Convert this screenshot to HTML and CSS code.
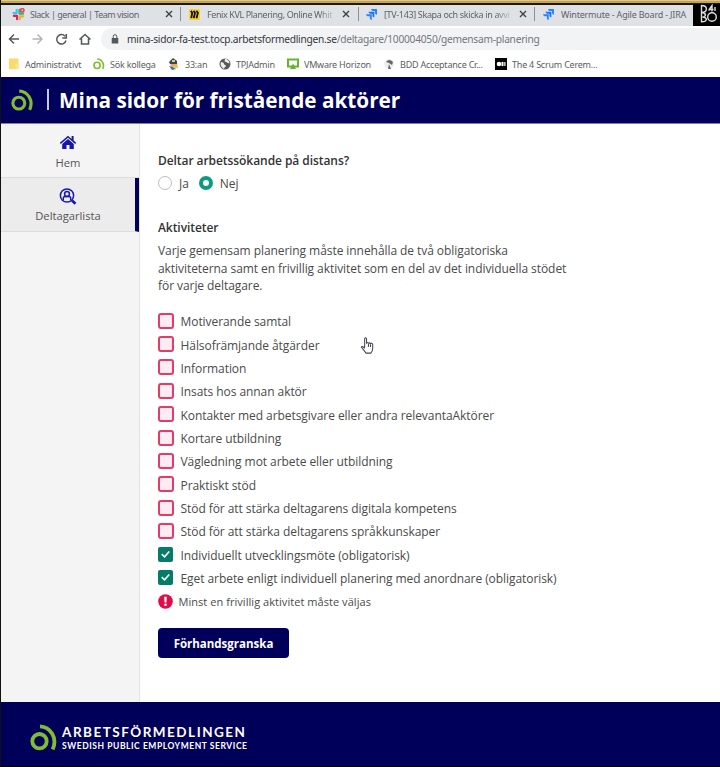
FILE: index.html
```html
<!DOCTYPE html>
<html lang="sv">
<head>
<meta charset="utf-8">
<title>Mina sidor för fristående aktörer</title>
<link rel="stylesheet" href="styles.css">
</head>
<body>
<svg width="0" height="0" class="defs" aria-hidden="true">
  <symbol id="logo" viewBox="0 0 28 28"><g fill="none" stroke="#80bd32" stroke-width="3.8"><circle cx="9.500" cy="17.200" r="7.200"/><path d="M10 2.400C20 2.800 28 13.500 22.700 25.500"/></g></symbol>
  <symbol id="jira" viewBox="0 0 12 12"><path d="M5.5 0H12v6.3C10.4 6 9.8 5 9.8 3.9V2.3H8.2C6.5 2.3 5.7 1.400 5.5 0Z" fill="#2684ff"/><path d="M2.800 2.900h6.300v6.200C7.600 8.800 7 7.800 7 6.700V5.200H5.400C3.900 5.200 3 4.300 2.800 2.900Z" fill="#1874ed"/><path d="M0 5.700h6.300V12C4.800 11.700 4.200 10.600 4.200 9.500V8H2.700C1.200 8 .2 7.100 0 5.700Z" fill="#2684ff"/></symbol>
  <symbol id="check" viewBox="0 0 16 16"><path d="M4 7.600 7 10.500 12 4.700" fill="none" stroke="#fff" stroke-width="1.700"/></symbol>
</svg>
<div class="window">
  <div class="tabs">
    <div class="tab tab-slack">
      <svg class="fav" viewBox="0 0 14 14"><g stroke-width="2.300" stroke-linecap="round"><path d="M5 2v3M1.500 5.500H5" stroke="#36c5f0"/><path d="M8 2v4M8.500 6h3.500" stroke="#2eb67d"/><path d="M2 8.500h3.500M5.500 9v3" stroke="#e01e5a"/><path d="M8.500 9v3M9 9h3" stroke="#ecb22e"/></g><circle cx="11" cy="2.500" r="2.700" fill="#e94b5b"/><circle cx="11" cy="2.500" r=".8" fill="#fff"/></svg>
      <span class="label">Slack | general | Team vision</span><svg class="close" viewBox="0 0 8 8"><path d="m1 1 6 6M7 1 1 7"/></svg>
    </div>
    <div class="tab tab-fenix">
      <svg class="fav" viewBox="0 0 12 12"><path fill="#ffd02f" d="M0 0h12v12H0z"/><path d="m2 2 1.500 2-1 6M5 2l1.500 2-1.200 6M8 2l1.700 2-1.500 6" fill="none" stroke="#111" stroke-width="2"/></svg>
      <span class="label fade">Fenix KVL Planering, Online Whit</span><svg class="close" viewBox="0 0 8 8"><path d="m1 1 6 6M7 1 1 7"/></svg>
    </div>
    <div class="tab tab-tv">
      <svg class="fav"><use href="#jira"/></svg>
      <span class="label fade">[TV-143] Skapa och skicka in avvi</span><svg class="close" viewBox="0 0 8 8"><path d="m1 1 6 6M7 1 1 7"/></svg>
    </div>
    <div class="tab tab-winter">
      <svg class="fav"><use href="#jira"/></svg>
      <span class="label">Wintermute - Agile Board - JIRA</span>
    </div>
    <svg class="overlay" viewBox="0 0 27 22"><path fill="#000" d="M0 0h27v22H0z"/><g fill="none" stroke="#ddd" stroke-width="1.400"><path d="M8.500 1v7.500c6.500 0 6.500-7 0-7M8.500 8.500v9.200c6.500 0 6-4.500 1-4.700 4 0 4-4.300-1-4.500"/><circle cx="19" cy="13" r="4.300"/><path d="m15.500 6.500 3.500-5v6M15.500 5.500h5M22 3v4"/></g></svg>
  </div>
  <div class="toolbar">
    <svg class="nav" viewBox="0 0 92 24"><g fill="none" stroke="#55585c" stroke-width="1.500"><path d="M19 12H9.500m4.500-4.500L9.500 12l4.500 4.500"/><path stroke="#b3b5b8" d="M32.500 12H42m-4.500-4.500L42 12l-4.500 4.500"/><path d="M65 9.200A4.700 4.700 0 1 0 66 13.500M66.300 7v4h-4"/><path d="m79.500 12.500 5.500-5 5.500 5M81.500 11.500V17h7v-5.500"/></g></svg>
    <div class="omnibox">
      <svg class="lock" viewBox="0 0 8 10"><path d="M.7 4h6.600v5.500H.7z" fill="#55585c"/><path d="M2.200 4V2.500a1.800 1.800 0 0 1 3.600 0V4" fill="none" stroke="#55585c"/></svg>
      <span class="url"><b>mina-sidor-fa-test.tocp.arbetsformedlingen.se</b>/deltagare/100004050/gemensam-planering</span>
    </div>
  </div>
  <div class="bookmarks">
    <div class="bm bm-admin"><svg viewBox="0 0 12 12"><path d="M1 .5h9.500v10.700H1z" fill="#fcd870"/><path d="M7.500 6h3v5.200h-3z" fill="#ffe38e"/></svg><span>Administrativt</span></div>
    <div class="bm bm-sok"><svg><use href="#logo"/></svg><span>Sök kollega</span></div>
    <div class="bm bm-33"><svg viewBox="0 0 12 12"><circle cx="6" cy="7" r="3.500" fill="#eca96e"/><path d="m1 4 4-4 4 3v3H2z" fill="#31486b"/><path d="M4 2h3v2H4zM5 8h5v2H6z" fill="#f1cb39"/><path d="m1 8 3 1 4 2-4 1z" fill="#2477a8"/></svg><span>33:an</span></div>
    <div class="bm bm-tpj"><svg viewBox="0 0 12 12"><circle cx="6" cy="6" r="5.500" fill="#55585c"/><path d="M2 4c2 0 3 1 3 2s2 1 2 2-2 1-2 3C2 9 1 7 2 4Zm4-3c3 0 4 2 4.500 4C9 6 8 4 7 4S5 3 6 1Z" fill="#eee"/></svg><span>TPJAdmin</span></div>
    <div class="bm bm-vm"><svg viewBox="0 0 12 12"><path d="M1 1.500h10v7H1z" fill="none" stroke="#65b52c" stroke-width="2"/><path d="M3 11h6L6 5.500z" fill="#65b52c"/></svg><span>VMware Horizon</span></div>
    <div class="bm bm-bdd"><svg viewBox="0 0 12 12"><circle cx="6" cy="6" r="5" fill="#eee"/><path d="M3 4q3-4 7 0l-1 3-3-2zM6 6l2 5H5z" fill="#666"/></svg><span>BDD Acceptance Cr...</span></div>
    <div class="bm bm-scrum"><svg viewBox="0 0 12 12"><path d="M0 0h12v12H0z"/><circle cx="4" cy="6" r="2.300" fill="#fff"/><path d="M6.500 4h2v4h-2zM9.300 4h1.200v4H9.300z" fill="#fff"/></svg><span>The 4 Scrum Cerem...</span></div>
  </div>
  <header class="header"><svg class="logo"><use href="#logo"/></svg><i class="divider"></i><h1>Mina sidor för fristående aktörer</h1></header>
  <div class="body">
    <nav class="side">
      <a class="item"><svg viewBox="0 0 18 15"><path d="M9 .8.800 7.800l1 1.100L9 2.800l7.200 6.100 1-1.100-2.600-2.200V1h-2v2.900z"/><path d="M9 4 3.200 8.900V14h4.300v-4h3v4h4.300V8.900z"/></svg><span>Hem</span></a>
      <a class="item active"><svg class="find" viewBox="0 0 18 17"><g fill="none" stroke="#1717ae"><circle cx="8" cy="7.500" r="6.600" stroke-width="1.500"/><circle cx="8" cy="6" r="2.400" stroke-width="1.500"/><path d="M4.300 12V10c0-1.300 1.600-1.500 2.500-1.500h2.400c1 0 2.500.3 2.500 1.500v2" stroke-width="1.400"/><path d="m13 12.500 3.500 3.300" stroke-width="2.600"/></g></svg><span>Deltagarlista</span></a>
    </nav>
    <main class="main">
      <h2 class="question">Deltar arbetssökande på distans?</h2>
      <div class="radios"><i class="radio"></i><span class="ja">Ja</span><i class="radio on"></i><span>Nej</span></div>
      <h2 class="akt">Aktiviteter</h2>
      <p class="intro"><span>Varje gemensam planering måste innehålla de två obligatoriska</span><br><span>aktiviteterna samt en frivillig aktivitet som en del av det individuella stödet</span><br><span>för varje deltagare.</span></p>
      <div class="list">
        <label><i class="box"></i><span>Motiverande samtal</span></label>
        <label><i class="box"></i><span>Hälsofrämjande åtgärder</span></label>
        <label><i class="box"></i><span>Information</span></label>
        <label><i class="box"></i><span>Insats hos annan aktör</span></label>
        <label><i class="box"></i><span>Kontakter med arbetsgivare eller andra relevantaAktörer</span></label>
        <label><i class="box"></i><span>Kortare utbildning</span></label>
        <label><i class="box"></i><span>Vägledning mot arbete eller utbildning</span></label>
        <label><i class="box"></i><span>Praktiskt stöd</span></label>
        <label><i class="box"></i><span>Stöd för att stärka deltagarens digitala kompetens</span></label>
        <label><i class="box"></i><span>Stöd för att stärka deltagarens språkkunskaper</span></label>
        <label><i class="box on"><svg><use href="#check"/></svg></i><span>Individuellt utvecklingsmöte (obligatorisk)</span></label>
        <label><i class="box on"><svg><use href="#check"/></svg></i><span>Eget arbete enligt individuell planering med anordnare (obligatorisk)</span></label>
      </div>
      <div class="error"><svg viewBox="0 0 16 16"><circle cx="8" cy="8" r="7.800" fill="#e00d4a"/><path d="M6.600 3h2.800L9 9H7z" fill="#fff"/><circle cx="8" cy="11.500" r="1.400" fill="#fff"/></svg><span>Minst en frivillig aktivitet måste väljas</span></div>
      <button class="preview">Förhandsgranska</button>
      <svg class="cursor" viewBox="0 0 15 19"><path d="M4.500 11V2q0-1.200 1-1.200t1 1.200v5q0-1.200 1-1.200t1 1.400q0-1 1-1t1 1.400q0-1 1-1t1.500 1.200V12q0 3-2 5H6Q4.500 15 2.500 12.500L1 10.500q.6-1 1.800-.2L4.500 12M8.500 7.500v3M10.700 8v2.500" fill="#fff" stroke="#444450" stroke-width="1.100"/></svg>
    </main>
  </div>
  <footer class="footer"><svg class="flogo"><use href="#logo"/></svg><div class="brand"><div class="name">ARBETSFÖRMEDLINGEN</div><div class="sub">SWEDISH PUBLIC EMPLOYMENT SERVICE</div></div></footer>
</div>
</body>
</html>
```
FILE: styles.css
```css
* { box-sizing: border-box; }
body { margin: 0; background: #fff; font-family: "Open Sans", "Noto Sans", sans-serif; color: #4a4a4a; }
.defs { position: absolute; }
svg { display: block; flex: none; }
span { white-space: nowrap; }
.window { width: 720px; height: 767px; border-left: 1px solid #111; border-bottom: 1px solid #000; display: flex; flex-direction: column; overflow: hidden; }

.tabs { height: 26px; flex: none; border-top: 1px solid #c8c8c8; background: linear-gradient(#d3a32b 0 2px, #191813 2px 4px, #dee1e6 4px); display: flex; padding-top: 3px; font-family: "Noto Sans", sans-serif; font-size: 9px; color: #606367; }
.tab { display: flex; align-items: center; height: 20px; }
.tab-slack { width: 179px; padding-left: 11px; }
.tab-fenix { width: 178px; padding-left: 9px; }
.tab-tv { width: 176px; padding-left: 8px; }
.tab-winter { width: 179px; padding-left: 9px; }
.tab + .tab { background: linear-gradient(#8d9094, #8d9094) 0 50% / 1px 14px no-repeat; }
.fav { width: 11px; height: 11px; margin-right: 7px; }
.tab-slack .fav { width: 13px; height: 13px; margin-right: 5px; }
.label { width: 130px; letter-spacing: -.35px; }
.tab-slack .label { width: 135px; letter-spacing: -.48px; }
.tab-winter .label { letter-spacing: -.2px; }
.tab-fenix .label { letter-spacing: -.4px; }
.fade { -webkit-mask-image: linear-gradient(90deg, #000 86%, transparent); mask-image: linear-gradient(90deg, #000 86%, transparent); }
.close { width: 8px; height: 8px; fill: none; stroke: #3e4145; stroke-width: 1.4; margin-left: 5px; }
.tab-slack .close { margin-left: 0; }
.overlay { width: 27px; height: 22px; margin-left: -20px; }

.toolbar { height: 26px; flex: none; display: flex; align-items: center; }
.nav { width: 92px; height: 24px; margin-left: -1px; }
.omnibox { flex: 1; height: 22px; margin-left: 9px; border-radius: 11px 0 0 11px; background: #f1f3f4; display: flex; align-items: center; padding-left: 10px; }
.lock { width: 8px; height: 10px; }
.url { margin-left: 8px; font: 10.2px "Noto Sans", sans-serif; letter-spacing: -.25px; color: #74777b; }
.url b { font-weight: 400; color: #34373b; }

.bookmarks { height: 25px; flex: none; display: flex; align-items: center; font: 9px "Noto Sans", sans-serif; letter-spacing: -.22px; color: #5b5e62; padding-bottom: 1px; }
.bm { display: flex; align-items: center; gap: 5px; padding-left: 7px; }
.bm svg { width: 12px; height: 12px; }
.bm-admin { width: 85px; }
.bm-sok { width: 75px; }
.bm-33 { width: 51px; }
.bm-tpj { width: 68px; }
.bm-vm { width: 96px; }
.bm-bdd { width: 112px; }

.header { height: 47px; flex: none; background: #00005a; display: flex; align-items: center; border-bottom: 1px solid #8080a8; color: #fff; }
.logo { width: 23px; height: 23px; margin-left: 10px; }
.divider { width: 2px; height: 21px; background: #c8c8d8; margin: 0 0 1px 13px; }
h1 { margin: 0 0 1px 10px; font-size: 20.75px; line-height: 26px; font-weight: 700; white-space: nowrap; }

.body { height: 578px; flex: none; display: flex; }
.side { width: 139px; flex: none; background: #f4f4f4; border-right: 1px solid #e2e2e2; }
.item { height: 54px; display: flex; flex-direction: column; align-items: center; border-bottom: 1px solid #dcdcdc; padding: 11px 4px 0 0; font-size: 11.2px; line-height: 16px; color: #555; }
.item svg { width: 18px; height: 15px; fill: #1717ae; margin-bottom: 5px; }
.item.active { background: #ececec; border-right: 4px solid #00005a; padding: 10px 0 0; }
.item .find { height: 17px; margin-bottom: 3px; }

.main { position: relative; padding: 28px 0 0 18px; font-size: 12px; letter-spacing: -.065px; }
h2 { margin: 0; font-size: 12px; line-height: 18px; font-weight: 600; color: #333; white-space: nowrap; }
.radios { display: flex; align-items: center; height: 18px; margin-top: 4px; }
.radio { width: 14px; height: 14px; border: 1px solid #b9bdc3; border-radius: 50%; }
.radio.on { border: 4px solid #0d9b80; }
.radios span { margin-left: 7px; }
.radios .ja { margin-right: 10px; }
.akt { margin-top: 27px; }
.intro { margin: 5px 0 0; line-height: 17.7px; }
.list { margin-top: 15px; }
.list label { display: flex; height: 23.35px; align-items: center; gap: 7px; }
.box { width: 16px; height: 16px; margin-bottom: 2px; border: 2px solid #e23d69; border-radius: 3px; background: #ffebf1; }
.box.on { border: 0; border-radius: 2px; background: #067b67; width: 15px; height: 15px; margin-right: 1px; }
.box svg { width: 15px; height: 15px; }
.list span { margin-left: -.5px; }
.error { display: flex; align-items: center; height: 23px; gap: 5.5px; font-size: 11px; letter-spacing: .05px; }
.error svg { width: 15px; height: 15px; }
.preview { display: block; width: 131px; height: 30px; margin-top: 15px; padding: 0; border: 0; border-radius: 4px; background: #00005a; color: #fff; font: 700 11.5px "Open Sans", sans-serif; white-space: nowrap; }
.cursor { position: absolute; left: 220px; top: 213px; width: 15px; height: 18px; }

.footer { height: 64px; flex: none; background: #00005a; color: #fff; display: flex; padding-left: 29px; }
.flogo { width: 28px; height: 28px; margin-top: 22px; }
.brand { margin: 21px 0 0 4px; font-family: Lato, sans-serif; white-space: nowrap; }
.name { font-size: 13.5px; line-height: 18px; letter-spacing: 1.5px; font-weight: 700; }
.sub { font-size: 8.5px; line-height: 11px; letter-spacing: .56px; font-weight: 700; }
```
